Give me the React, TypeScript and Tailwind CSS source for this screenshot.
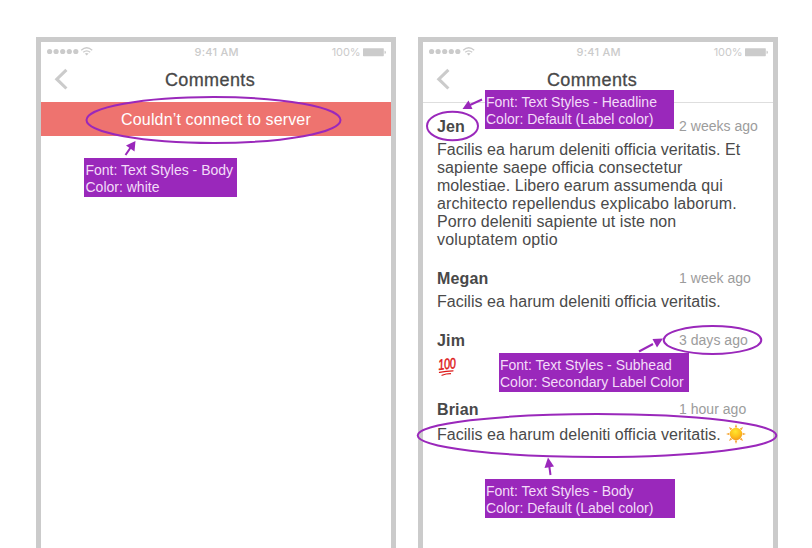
import React from 'react';

const SANS = "font-['Liberation_Sans',Arial,sans-serif]";

function StatusBar() {
  return (
    <div className="grid h-[20px] grid-cols-3 items-center pl-[6px] pr-[4.5px] text-[11px] leading-[20px] text-[#cbcbcb] font-['Inter','Roboto',sans-serif]">
      <div className="flex items-center">
        <svg className="-mt-[2px]" width="48" height="12" viewBox="0 0 48 12" fill="#cbcbcb">
          <circle cx="2.6" cy="6.5" r="2.6" />
          <circle cx="9.1" cy="6.5" r="2.6" />
          <circle cx="15.7" cy="6.5" r="2.6" />
          <circle cx="22.3" cy="6.5" r="2.6" />
          <circle cx="28.8" cy="6.5" r="2.6" />
          <g fill="none" stroke="#cbcbcb" strokeWidth="1.3">
            <path d="M34.2 5.2 Q39.7 0.2 45.2 5.2" />
            <path d="M36.2 7.3 Q39.7 4.3 43.2 7.3" />
          </g>
          <path d="M37.8 8.6 Q39.7 7.2 41.6 8.6 L39.7 10.6Z" />
        </svg>
      </div>
      <div className="whitespace-nowrap text-center font-medium tracking-[0.25px]">9:41 AM</div>
      <div className="flex items-center justify-end gap-[3px]">
        <span className="tracking-[-0.1px]">100%</span>
        <svg width="23" height="9" viewBox="0 0 23 9" fill="#cbcbcb">
          <rect x="0" y="0.2" width="20.8" height="8" rx="0.6" />
          <path d="M21.5 2.7h.5q.9 0 .9 1.5t-.9 1.5h-.5z" />
        </svg>
      </div>
    </div>
  );
}

function Phone({ children }: { children: React.ReactNode }) {
  return (
    <section className="h-[520px] w-[360px] shrink-0 border-[5px] border-b-0 border-[#cbcbcb] bg-white">
      <StatusBar />
      <header className="flex h-[40px] items-start">
        <svg className="ml-[13px] mt-[6px] shrink-0" width="16" height="24" viewBox="0 0 16 24">
          <path d="M12.4 1.9 L2.8 11.2 L12.4 20.5" fill="none" stroke="#cbcbcb" strokeWidth="3.1" />
        </svg>
        <h1 className="ml-[-29px] mr-[12px] mt-[8px] flex-1 text-center text-[18px] leading-[20px] tracking-[0.38px] text-[#484848] [-webkit-text-stroke:0.3px_#484848]">
          Comments
        </h1>
      </header>
      {children}
    </section>
  );
}

function Row({ name, date }: { name: string; date: string }) {
  return (
    <div className="flex h-[18px] items-center leading-[18px]">
      <b className="w-[242px] pt-[2px] text-[16px] font-bold tracking-[0.15px] text-[#484848]">{name}</b>
      <span className="whitespace-nowrap text-[14px] tracking-[0.03px] text-[#9c9c9c]">{date}</span>
    </div>
  );
}

function Hundred() {
  return (
    <span className="flex h-[18px] w-[20px] flex-col items-start pl-px">
      <span className="h-[12px] origin-left -rotate-6 scale-x-72 text-[15px] font-normal italic leading-[13px] tracking-[-0.2px] text-[#dd1717] [-webkit-text-stroke:0.5px_#dd1717]">100</span>
      <svg width="20" height="6" viewBox="0 0 20 6" fill="none" stroke="#dd1717" strokeLinecap="round">
        <path d="M1.5 2.4 Q8 0.8 15 0.8" strokeWidth="1.3" />
        <path d="M4 5.2 Q8 3.7 12.5 3.7" strokeWidth="1.2" />
      </svg>
    </span>
  );
}

function Sun() {
  return (
    <svg className="ml-[5px]" width="20" height="20" viewBox="-10 -10 20 20">
      <defs>
        <radialGradient id="sun" cx="45%" cy="30%" r="70%">
          <stop offset="0" stopColor="#ffe62e" />
          <stop offset="0.6" stopColor="#fdc01c" />
          <stop offset="1" stopColor="#f39a1c" />
        </radialGradient>
      </defs>
      {[0, 45, 90, 135, 180, 225, 270, 315].map((a) => (
        <path key={a} d="M-1.3 -6.6 L0 -10 L1.3 -6.6Z" fill="#f6a83a" transform={`rotate(${a})`} />
      ))}
      <circle r="6.2" fill="url(#sun)" />
    </svg>
  );
}

function Note({ className, lines }: { className: string; lines: string[] }) {
  return (
    <div className={`absolute h-[39px] whitespace-nowrap bg-[#9a28bb] pl-[1.5px] pt-[4px] text-[14px] leading-[17px] text-[#f3dcf8] ${className}`}>
      {lines.map((l) => (
        <div key={l}>{l}</div>
      ))}
    </div>
  );
}

const BODY = 'text-[16px] leading-[18px] text-[#4a4a4a] whitespace-nowrap';

export default function App() {
  return (
    <main className={`relative flex h-[548px] w-[812px] gap-[22px] overflow-hidden bg-white pl-[36px] pt-[37px] ${SANS}`}>
      <Phone>
        <div className="flex h-[34px] items-center justify-center bg-[#ee736f] pt-[2px] text-[16px] tracking-[0.15px] text-white">
          <span>Couldn’t connect to server</span>
        </div>
      </Phone>
      <Phone>
        <div className="border-t border-[#dedede] pl-[14px] pt-[14px]">
          <Row name="Jen" date="2 weeks ago" />
          <p className={`mt-[6px] ${BODY}`}>
            <span className="tracking-[0.025px]">Facilis ea harum deleniti officia veritatis. Et</span><br />
            <span className="tracking-[0.11px]">sapiente saepe officia consectetur</span><br />
            <span className="tracking-[0.03px]">molestiae. Libero earum assumenda qui</span><br />
            <span className="tracking-[0.11px]">architecto repellendus explicabo laborum.</span><br />
            <span className="tracking-[0.05px]">Porro deleniti sapiente ut iste non</span><br />
            <span className="tracking-[0.22px]">voluptatem optio</span>
          </p>
          <div className="mt-[20px]">
            <Row name="Megan" date="1 week ago" />
            <p className={`mt-[6px] tracking-[0.03px] ${BODY}`}>Facilis ea harum deleniti officia veritatis.</p>
          </div>
          <div className="mt-[20px]">
            <Row name="Jim" date="3 days ago" />
            <div className="mt-[9px]"><Hundred /></div>
          </div>
          <div className="mt-[24px]">
            <Row name="Brian" date="1 hour ago" />
            <div className={`mt-[7px] flex h-[18px] items-center ${BODY}`}>
              <span className="pt-[2px] tracking-[0.03px]">Facilis ea harum deleniti officia veritatis.</span>
              <Sun />
            </div>
          </div>
        </div>
      </Phone>

      <Note className="left-[84px] top-[158px] w-[152.5px]" lines={['Font: Text Styles - Body', 'Color: white']} />
      <Note className="left-[484.5px] top-[90px] w-[189px]" lines={['Font: Text Styles - Headline', 'Color: Default (Label color)']} />
      <Note className="left-[498.5px] top-[353px] w-[190px]" lines={['Font: Text Styles - Subhead', 'Color: Secondary Label Color']} />
      <Note className="left-[484.5px] top-[479px] w-[190px]" lines={['Font: Text Styles - Body', 'Color: Default (Label color)']} />

      <svg className="absolute left-0 top-0" width="812" height="548" fill="none" stroke="#9a28bb" strokeWidth="2">
        <ellipse cx="213.5" cy="120" rx="127" ry="23" />
        <ellipse cx="452.5" cy="126" rx="25.5" ry="14.3" />
        <ellipse cx="712.5" cy="340" rx="48.8" ry="14" />
        <ellipse cx="597" cy="435.5" rx="179.3" ry="21.5" />
        <path d="M125.5 155 L131 147" />
        <path d="M482 99.5 L470 105" />
        <path d="M639 351.5 L653 344" />
        <path d="M550.5 475 L549 464" />
        <g fill="#9a28bb" stroke="none">
          <path d="M135.5 141 L134.5 151.5 L126 145.5Z" />
          <path d="M462.5 109 L468.5 100.5 L472.5 109Z" />
          <path d="M663 338.5 L657 347.5 L652.5 339Z" />
          <path d="M548 457.5 L554 466.5 L544.5 468Z" />
        </g>
      </svg>
    </main>
  );
}
